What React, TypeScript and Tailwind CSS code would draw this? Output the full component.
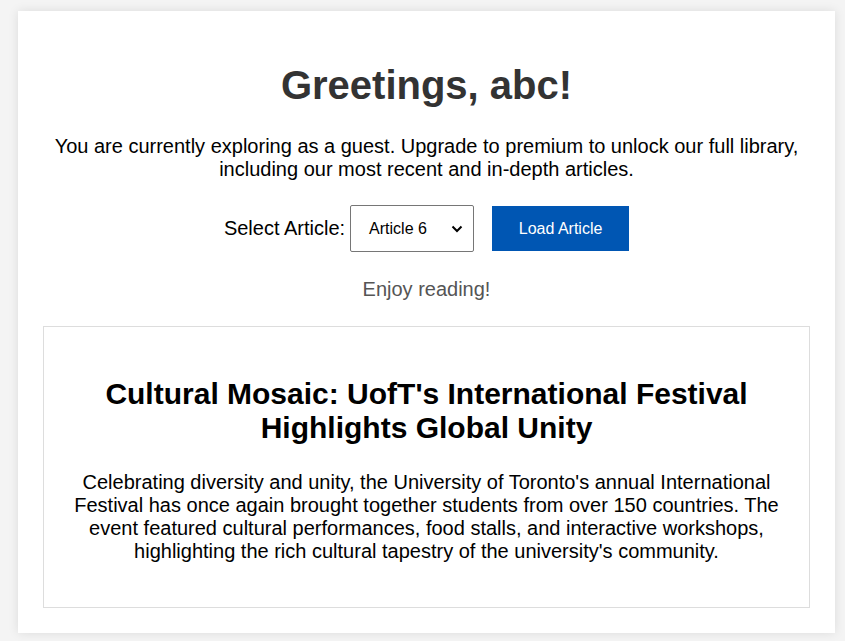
import React from "react";

export default function App() {
  return (
    <div className="min-h-[641px] bg-[#f4f4f4] pt-[11px] pl-[18px] pr-[10px] pb-[9px]" style={{ fontFamily: '"Liberation Sans", Arial, sans-serif' }}>
      <div className="bg-white shadow-[0_0_10px_rgba(0,0,0,0.1)] px-[25px] pt-[30px] pb-[25px] text-center text-black">
        <h1 className="text-[40px] leading-[46px] font-bold text-[#333] mt-[21px] mb-[27px]">Greetings, abc!</h1>
        <p className="text-[20px] leading-[23px] px-[5px]">
          You are currently exploring as a guest. Upgrade to premium to unlock our full library, including our most recent and in-depth articles.
        </p>
        <div className="flex items-center justify-center mt-[24px]">
          <label className="text-[20px] leading-[23px] mr-[5px]">Select Article:</label>
          <div className="relative w-[124px] h-[47px] border border-[#767676] rounded-[2px] flex items-center pl-[18px] text-[16px]">
            <span>Article 6</span>
            <svg className="absolute right-[10px] top-[19px]" width="12" height="8" viewBox="0 0 12 8" fill="none">
              <path d="M1.5 1.5 L6 6 L10.5 1.5" stroke="#000" strokeWidth="2" />
            </svg>
          </div>
          <button className="ml-[18px] w-[137px] h-[45px] bg-[#0056b3] text-white text-[16px]">Load Article</button>
        </div>
        <p className="text-[20px] leading-[23px] text-[#555] mt-[26px]">Enjoy reading!</p>
        <div className="border border-[#ddd] mt-[25px] px-[30px] pt-[50px] pb-[44px]">
          <h2 className="text-[30px] leading-[34px] font-bold">Cultural Mosaic: UofT's International Festival Highlights Global Unity</h2>
          <p className="text-[20px] leading-[23px] mt-[26px]">
            Celebrating diversity and unity, the University of Toronto's annual International Festival has once again brought together students from over 150 countries. The event featured cultural performances, food stalls, and interactive workshops, highlighting the rich cultural tapestry of the university's community.
          </p>
        </div>
      </div>
    </div>
  );
}
